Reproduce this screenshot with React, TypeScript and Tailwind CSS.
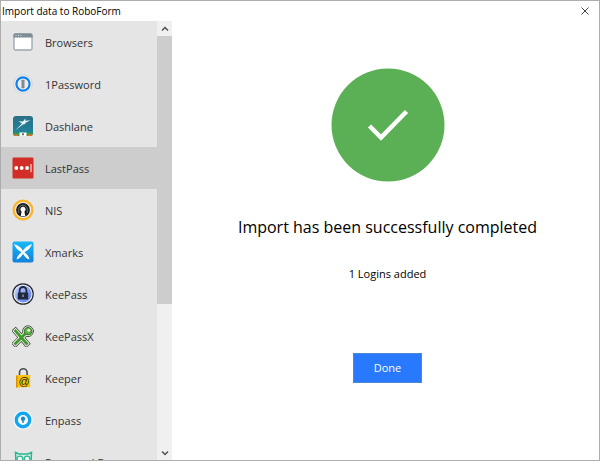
import type { ReactNode } from "react";

type Source = { name: string; icon: ReactNode };

function Icon({ children }: { children: ReactNode }) {
  return (
    <svg viewBox="0 0 22 22" className="size-[22px] shrink-0" aria-hidden="true">
      {children}
    </svg>
  );
}

const sources: Source[] = [
  {
    name: "Browsers",
    icon: (
      <Icon>
        <rect x="2" y="3" width="18" height="16" rx="1.5" fill="#fff" stroke="#9aa5ad" strokeWidth="1.3" />
        <path d="M1.5 6.5V4Q1.5 2.5 3 2.5H19Q20.5 2.5 20.5 4V6.5Z" fill="#7e8c96" />
        <path d="M3.5 4.5H4.5M6 4.5H7M8.5 4.5H9.5" stroke="#dce1e4" />
      </Icon>
    ),
  },
  {
    name: "1Password",
    icon: (
      <Icon>
        <circle cx="11" cy="11" r="9.2" fill="#f8f8f8" stroke="#c4c6c8" strokeWidth=".7" />
        <circle cx="11" cy="11" r="6.6" fill="#e9eef3" stroke="#0f7ff0" strokeWidth="2.2" />
        <rect x="9.5" y="6.8" width="3" height="8.4" rx=".4" fill="#858789" />
      </Icon>
    ),
  },
  {
    name: "Dashlane",
    icon: (
      <Icon>
        <defs>
          <linearGradient id="dash" x1="0" y1="0" x2="0" y2="1">
            <stop stopColor="#2b6f88" />
            <stop offset="1" stopColor="#1d879b" />
          </linearGradient>
          <clipPath id="dashClip">
            <rect x="1" y="1" width="20" height="20" rx="3" />
          </clipPath>
        </defs>
        <g clipPath="url(#dashClip)">
          <rect x="1" y="1" width="20" height="20" fill="url(#dash)" />
          <path d="M1 17.8H21V21H1Z" fill="#369b44" />
          <path d="M1 19.4H6V21H1ZM16 19.4H21V21H16Z" fill="#f26b32" />
          <path d="M7.5 17.5H14.5V21H7.5Z" fill="#fff" />
          <path d="M11 18.3V20.3" stroke="#222" strokeWidth="1.3" />
          <path d="M3 15.5L10 8.6L6.5 6.2L11 6.6L13.4 3.2L13.2 5.8L18.5 5.2L14 7.4L12.6 9.2L10.8 9.6Z" fill="#e8f1f3" />
        </g>
      </Icon>
    ),
  },
  {
    name: "LastPass",
    icon: (
      <Icon>
        <rect x=".5" y=".5" width="21" height="21" rx="1.2" fill="#d32d27" />
        <circle cx="4.3" cy="11" r="1.9" fill="#fff" />
        <circle cx="9.7" cy="11" r="1.9" fill="#fff" />
        <circle cx="15.1" cy="11" r="1.9" fill="#fff" />
        <path d="M19 7V15.2" stroke="#fff" strokeWidth="1" />
      </Icon>
    ),
  },
  {
    name: "NIS",
    icon: (
      <Icon>
        <circle cx="11" cy="11" r="9.3" fill="#f5f5f5" stroke="#fbb52c" strokeWidth="2.4" />
        <circle cx="11" cy="11" r="6.9" fill="#1c1c1c" />
        <path d="M6.7 14V10.5A4.3 4.3 0 0 1 15.3 10.5V14" fill="none" stroke="#85888b" strokeWidth=".8" />
        <circle cx="11" cy="10.2" r="2.5" fill="#fff" />
        <path d="M9.7 12H12.3L13.3 17.2H8.7Z" fill="#fff" />
      </Icon>
    ),
  },
  {
    name: "Xmarks",
    icon: (
      <Icon>
        <defs>
          <linearGradient id="xmarks" x1="0" y1="0" x2="0" y2="1">
            <stop stopColor="#16b9f8" />
            <stop offset="1" stopColor="#1380db" />
          </linearGradient>
        </defs>
        <rect x=".5" y=".5" width="21" height="21" rx="2" fill="url(#xmarks)" />
        <path d="M2 3Q8.5 5 11 9.8Q13.5 5 20 3Q18.5 8 12.4 11.2Q16.5 14 17.5 18.5Q13 17 11 12.4Q9 17 4.5 18.5Q5.5 14 9.6 11.2Q3.5 8 2 3Z" fill="#fff" />
      </Icon>
    ),
  },
  {
    name: "KeePass",
    icon: (
      <Icon>
        <defs>
          <linearGradient id="keepass" x1="0" y1="0" x2="1" y2="1">
            <stop stopColor="#cad6ff" />
            <stop offset="1" stopColor="#5375e8" />
          </linearGradient>
        </defs>
        <circle cx="11" cy="11" r="10.2" fill="#eef1fc" stroke="#25282e" strokeWidth="1.2" />
        <circle cx="11" cy="11" r="8.5" fill="url(#keepass)" />
        <path d="M7.6 10V7.4A3.4 3.4 0 0 1 14.4 7.4V10" fill="none" stroke="#20283c" strokeWidth="1.8" />
        <rect x="5.8" y="9.5" width="10.4" height="7" rx=".5" fill="#20283c" />
        <path d="M11 11.5V14" stroke="#a7b5e8" strokeWidth="1.2" />
      </Icon>
    ),
  },
  {
    name: "KeePassX",
    icon: (
      <Icon>
        <g fill="none" strokeLinecap="square">
          <path d="M3.5 6L14.5 18.5M3.5 18.5L14 8" stroke="#343b32" strokeWidth="6" />
          <circle cx="16" cy="6.2" r="5.4" fill="#f4f5ef" stroke="#343b32" strokeWidth=".9" />
          <path d="M3.5 6L14.5 18.5M3.5 18.5L14 8" stroke="#f4f5ef" strokeWidth="4.6" />
          <path d="M3.5 6L14.5 18.5M3.5 18.5L14 8" stroke="#3f982c" strokeWidth="2.8" />
        </g>
        <circle cx="16" cy="6.2" r="3.8" fill="#62ad47" stroke="#327c27" />
        <circle cx="16.7" cy="5.2" r="1.5" fill="#e4f1dd" />
      </Icon>
    ),
  },
  {
    name: "Keeper",
    icon: (
      <Icon>
        <path d="M7.5 9V5.5A3.8 3.8 0 0 1 15.1 5.5V9" fill="none" stroke="#4b4d4f" strokeWidth="1.6" />
        <path d="M4 8.5L6 8H18.2V20L4 20.5Z" fill="#f9c20c" />
        <path d="M4 8.5L5.5 9V20.5H4Z" fill="#d49200" />
        <text x="12" y="17.5" textAnchor="middle" fontFamily="Liberation Sans, sans-serif" fontSize="11" fill="#2b230a">@</text>
      </Icon>
    ),
  },
  {
    name: "Enpass",
    icon: (
      <Icon>
        <circle cx="11" cy="11" r="9.7" fill="#f7f9fa" />
        <circle cx="11" cy="11" r="6.7" fill="#fff" stroke="#12a5f2" strokeWidth="3.4" />
        <circle cx="11" cy="9.8" r="2.2" fill="#178cca" />
        <path d="M11 10V14" stroke="#178cca" strokeWidth="1.5" />
      </Icon>
    ),
  },
  {
    name: "Password Boss",
    icon: (
      <Icon>
        <path d="M3.5 1.5L7 3H16L19.5 1.5L19 12Q17 19 11.5 19Q6 19 4 12Z" fill="#d8efe7" stroke="#29b68e" strokeWidth="1.5" />
        <circle cx="7.9" cy="8" r="2.9" fill="#edf7f3" stroke="#29b68e" strokeWidth="1.3" />
        <circle cx="15.1" cy="8" r="2.9" fill="#edf7f3" stroke="#29b68e" strokeWidth="1.3" />
        <path d="M10 11L11.5 13L13 11" fill="#29b68e" />
      </Icon>
    ),
  },
];

function ScrollArrow({ label, path }: { label: string; path: string }) {
  return (
    <button type="button" aria-label={label} className="flex h-[15px] w-full shrink-0 items-center justify-center">
      <svg viewBox="0 0 8 8" className="size-2" aria-hidden="true">
        <path d={path} fill="none" stroke="#505050" strokeWidth="1.5" />
      </svg>
    </button>
  );
}

export default function App() {
  return (
    <div className="flex h-screen flex-col overflow-hidden border border-[#adadad] bg-white font-['Open_Sans','Noto_Sans',sans-serif] text-[11px] text-black">
      <header className="flex h-5 shrink-0 items-center justify-between pr-2 pl-px">
        <h1 className="text-[10px] leading-5">Import data to RoboForm</h1>
        <button type="button" aria-label="Close" className="flex size-3 items-center justify-center">
          <svg viewBox="0 0 8 8" className="size-2" aria-hidden="true">
            <path d="M.5 .5L7.5 7.5M7.5 .5L.5 7.5" stroke="#444" strokeWidth="1" />
          </svg>
        </button>
      </header>

      <div className="flex min-h-0 flex-1">
        <aside className="flex w-[171px] shrink-0 bg-[#e5e5e5]">
          <ul className="min-w-0 flex-1 overflow-hidden">
            {sources.map((source) => (
              <li key={source.name}>
                <button
                  type="button"
                  aria-pressed={source.name === "LastPass"}
                  className="flex h-[42px] w-full items-center gap-[11px] pl-[11px] text-left whitespace-nowrap text-[#333] aria-pressed:bg-[#cdcdcd]"
                >
                  {source.icon}
                  <span className="pt-0.5">{source.name}</span>
                </button>
              </li>
            ))}
          </ul>
          <div className="flex w-[15px] flex-col bg-[#f0f0f0]">
            <ScrollArrow label="Scroll up" path="M1 5.5L4 2.5L7 5.5" />
            <div className="min-h-0 flex-1">
              <div className="h-[65.5%] bg-[#cdcdcd]" />
            </div>
            <ScrollArrow label="Scroll down" path="M1 2.5L4 5.5L7 2.5" />
          </div>
        </aside>

        <main className="flex min-w-0 flex-1 flex-col items-center pt-[47px] pl-1">
          <svg viewBox="0 0 114 114" className="size-[114px]" aria-hidden="true">
            <circle cx="57" cy="57" r="56.5" fill="#5bb055" />
            <path d="M38.5 58L50 69.5L75.5 43.5" fill="none" stroke="#fff" strokeWidth="4.5" />
          </svg>
          <h2 className="mt-[33px] text-base leading-6 font-medium">Import has been successfully completed</h2>
          <p className="mt-[25px] leading-5">1 Logins added</p>
          <button type="button" className="mt-[69px] h-[30px] w-[69px] border border-[#4d88d6] bg-[#2979ff] pt-px text-white">
            Done
          </button>
        </main>
      </div>
    </div>
  );
}
